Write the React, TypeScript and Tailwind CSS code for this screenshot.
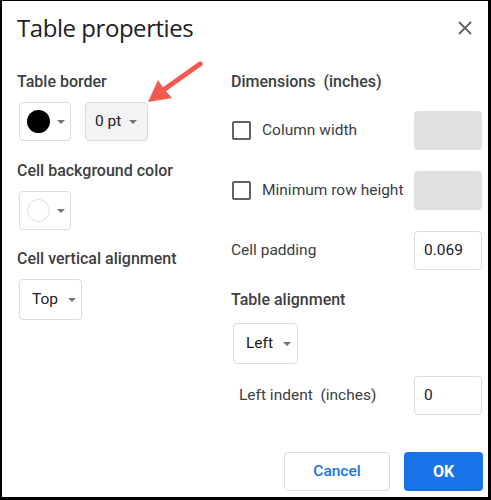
import React from 'react';

const Caret: React.FC = () => (
  <svg width="8" height="4" viewBox="0 0 8 4" className="shrink-0">
    <path d="M0 0h8L4 4z" fill="#757575" />
  </svg>
);

const Label: React.FC<{ children: React.ReactNode; className?: string }> = ({ children, className = '' }) => (
  <div className={`h-[20px] leading-[20px] text-[16px] font-medium text-[#3c4043] whitespace-pre ${className}`}>{children}</div>
);

const Checkbox: React.FC = () => (
  <span className="w-[19px] h-[19px] border-2 border-[#5f6368] rounded-[2px] shrink-0" />
);

const NumberBox: React.FC<{ value?: string; disabled?: boolean }> = ({ value, disabled }) =>
  disabled ? (
    <div className="w-[68px] h-[39px] rounded-[4px] bg-[#e0e0e0]" />
  ) : (
    <div className="w-[68px] h-[39px] rounded-[4px] border border-[#dadce0] flex items-center pl-[9px] text-[15.5px] text-[#202124]">
      {value}
    </div>
  );

const App: React.FC = () => {
  return (
    <div className="relative w-[491px] h-[500px] bg-white border-t border-l-2 border-r-[3px] border-b-[3px] border-black flex flex-col font-['Roboto',sans-serif]">
      {/* header */}
      <div className="flex items-start justify-between pt-[11px] pl-[15px] pr-[16px]">
        <h1 className="h-[32px] leading-[32px] text-[24px] text-[#202124] font-['Open_Sans',sans-serif] tracking-[-0.45px]">Table properties</h1>
        <svg width="14" height="14" viewBox="0 0 14 14" className="mt-[9px]">
          <path d="M1 1l12 12M13 1L1 13" stroke="#5f6368" strokeWidth="1.8" />
        </svg>
      </div>

      {/* body */}
      <div className="flex pl-[15px] mt-[28px]">
        <div className="w-[213px] flex flex-col">
          <Label>Table border</Label>
          <div className="flex gap-[14px] mt-[10px] ml-[2px]">
            <button className="w-[52px] h-[39px] rounded-[4px] border border-[#dadce0] flex items-center pl-[7px] gap-[7px]">
              <span className="w-[23px] h-[23px] rounded-full bg-black" />
              <Caret />
            </button>
            <button className="w-[63px] h-[39px] rounded-[4px] border border-[#dadce0] bg-[#f1f3f4] flex items-center pl-[9px] gap-[8px] text-[15.5px] text-[#202124]">
              0 pt
              <Caret />
            </button>
          </div>

          <Label className="mt-[20px]">Cell background color</Label>
          <div className="mt-[10px] ml-[2px]">
            <button className="w-[52px] h-[39px] rounded-[4px] border border-[#dadce0] flex items-center pl-[7px] gap-[7px]">
              <span className="w-[23px] h-[23px] rounded-full border border-[#dadce0] bg-white" />
              <Caret />
            </button>
          </div>

          <Label className="mt-[19px]">Cell vertical alignment</Label>
          <div className="mt-[10px] ml-[2px]">
            <button className="w-[63px] h-[41px] rounded-[4px] border border-[#dadce0] flex items-center pl-[12px] gap-[10px] text-[15.5px] text-[#202124]">
              Top
              <Caret />
            </button>
          </div>
        </div>

        <div className="w-[252px] flex flex-col">
          <Label className="pl-[1px]">Dimensions  (inches)</Label>

          <div className="flex items-center justify-between mt-[19px]">
            <div className="flex items-center gap-[11px] pl-[2px] text-[15.5px] text-[#3c4043]">
              <Checkbox />
              Column width
            </div>
            <NumberBox disabled />
          </div>

          <div className="flex items-center justify-between mt-[21px]">
            <div className="flex items-center gap-[11px] pl-[2px] text-[15.5px] text-[#3c4043]">
              <Checkbox />
              Minimum row height
            </div>
            <NumberBox disabled />
          </div>

          <div className="flex items-center justify-between mt-[21px]">
            <span className="pl-[1px] text-[15.5px] text-[#3c4043]">Cell padding</span>
            <NumberBox value="0.069" />
          </div>

          <Label className="mt-[20px] pl-[1px]">Table alignment</Label>
          <div className="mt-[13px] ml-[3px]">
            <button className="w-[65px] h-[41px] rounded-[4px] border border-[#dadce0] flex items-center pl-[12px] gap-[10px] text-[15.5px] text-[#202124]">
              Left
              <Caret />
            </button>
          </div>

          <div className="flex items-center justify-between mt-[12px]">
            <span className="pl-[9px] text-[15.5px] text-[#3c4043] whitespace-pre">Left indent  (inches)</span>
            <NumberBox value="0" />
          </div>
        </div>
      </div>

      {/* footer */}
      <div className="mt-auto flex justify-end gap-[14px] pr-[5px] pb-[6px]">
        <button className="w-[106px] h-[39px] rounded-[4px] border border-[#dadce0] text-[15.5px] font-medium text-[#1a73e8]">Cancel</button>
        <button className="w-[79px] h-[39px] rounded-[4px] bg-[#1a73e8] text-[16px] font-bold text-white">OK</button>
      </div>

      {/* annotation arrow */}
      <svg className="absolute left-0 top-0 pointer-events-none" width="491" height="500" viewBox="0 0 491 500">
        <line x1="198" y1="63" x2="160" y2="90" stroke="#f25a4f" strokeWidth="5" strokeLinecap="round" />
        <polygon points="146,101 156,79 162,88 170,97" fill="#f25a4f" />
      </svg>
    </div>
  );
};

export default App;
